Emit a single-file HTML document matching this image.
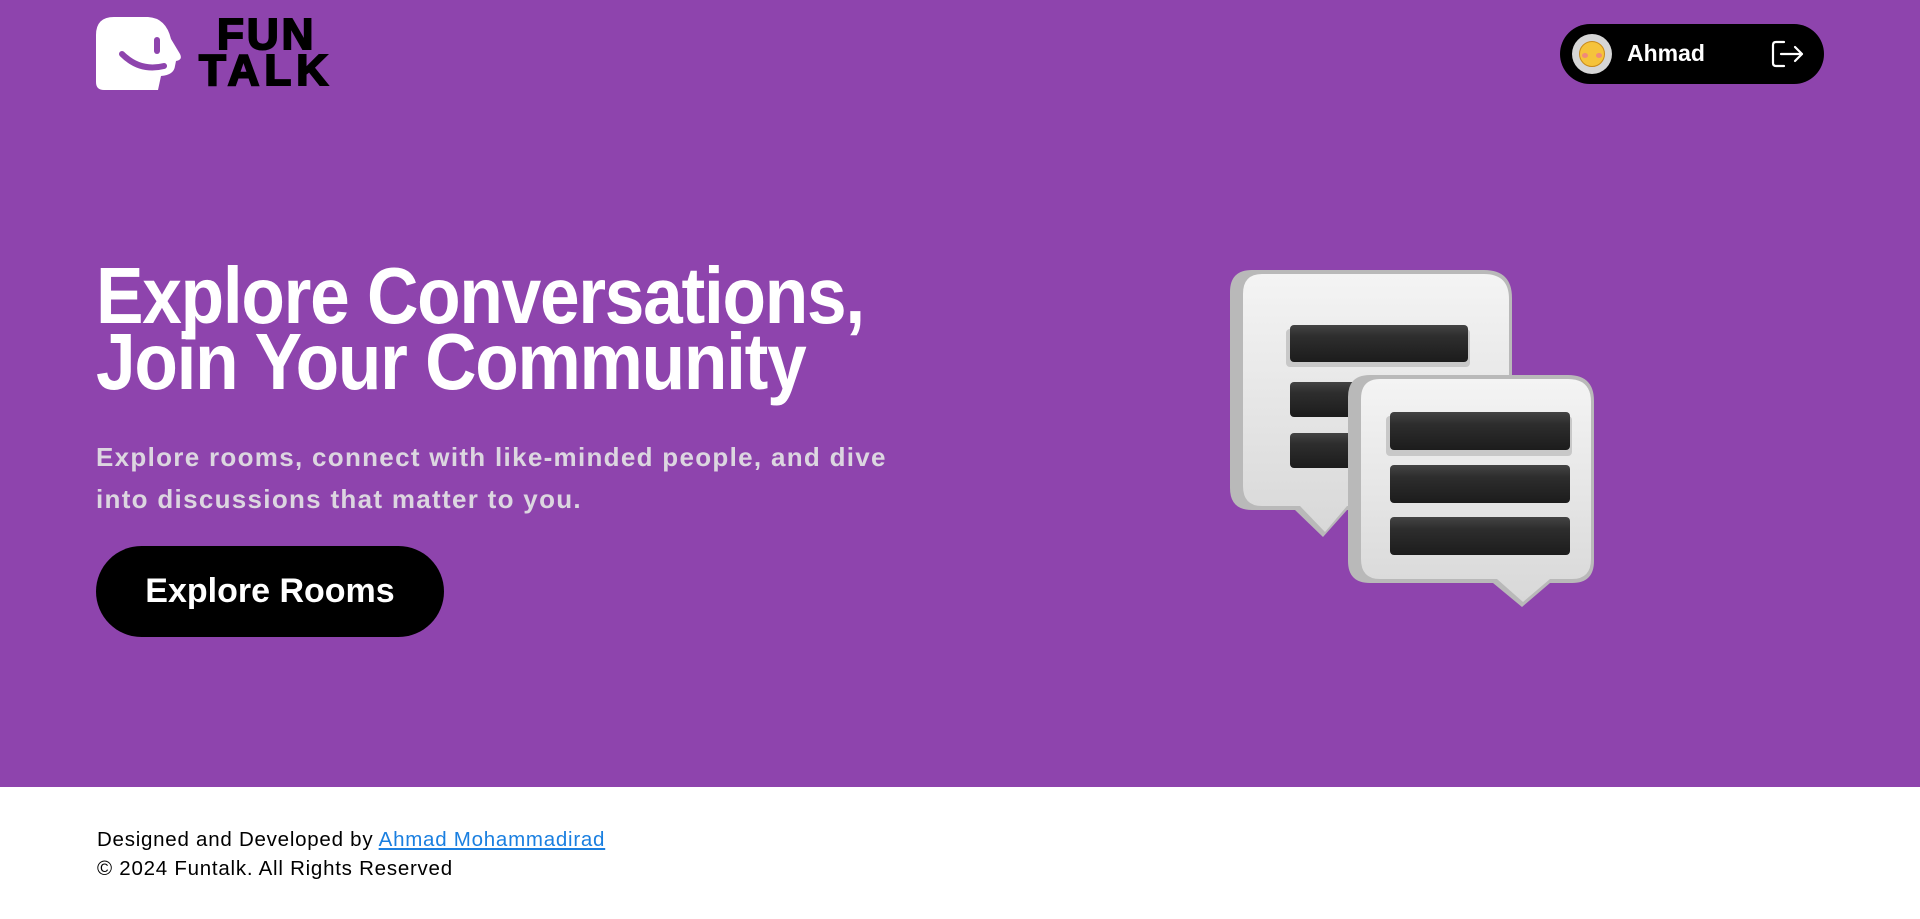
<!DOCTYPE html>
<html><head><meta charset="utf-8"><style>
*{margin:0;padding:0;box-sizing:border-box}
html,body{width:1920px;height:919px;overflow:hidden;background:#fff;font-family:"Liberation Sans",sans-serif}
.hero{position:absolute;left:0;top:0;width:1920px;height:787px;background:#8e44ad}
.abs{position:absolute}
h1{position:absolute;left:96px;top:263px;font-size:80px;line-height:66px;font-weight:700;color:#fff;letter-spacing:-1.4px;transform:scaleX(.89);transform-origin:left top;white-space:nowrap}
.sub{position:absolute;left:96px;top:436px;font-size:26px;line-height:42px;font-weight:700;color:#dcd6e0;white-space:nowrap;letter-spacing:1.3px}
.btn{position:absolute;left:96px;top:546px;width:348px;height:91px;border-radius:46px;background:#000;color:#fff;font-size:34px;font-weight:700;text-align:center;line-height:91px}
.pill{position:absolute;left:1560px;top:24px;width:264px;height:60px;border-radius:30px;background:#000}
.foot{position:absolute;left:97px;top:825px;font-size:20.5px;line-height:29px;color:#000;letter-spacing:.75px}
.foot a{color:#1a7fe0;text-decoration:underline}
</style></head><body>
<div class="hero"></div>
<svg class="abs" style="left:96px;top:17px" width="90" height="76" viewBox="0 0 90 76">
<path d="M0 18 Q0 0 18 0 L52 0 Q70 1 75 22 L84 37 Q87 43 80 44 L79 49 Q78 58 65 59 L62 73 L8 73 Q0 73 0 65 Z" fill="#fff"/>
<line x1="61" y1="23" x2="61" y2="34" stroke="#8e44ad" stroke-width="6" stroke-linecap="round"/>
<path d="M26 37 Q44 55 68 49" fill="none" stroke="#8e44ad" stroke-width="6" stroke-linecap="round"/>
</svg>
<div class="abs" style="left:217px;top:15px;font-size:44px;font-weight:700;line-height:40px;color:#000;letter-spacing:3px;-webkit-text-stroke:2px #000">FUN</div>
<div class="abs" style="left:199px;top:51px;font-size:44px;font-weight:700;line-height:40px;color:#000;letter-spacing:5px;-webkit-text-stroke:2px #000">TALK</div>

<div class="pill"></div>
<div class="abs" style="left:1572px;top:34px;width:40px;height:40px;border-radius:50%;background:#d6d6d6"></div>
<div class="abs" style="left:1579px;top:41px;width:26px;height:26px;border-radius:50%;background:#f5c33b;border:1px solid #c98a1a"></div>
<div class="abs" style="left:1582px;top:53px;width:6px;height:5px;border-radius:50%;background:#f08a7a"></div>
<div class="abs" style="left:1596px;top:53px;width:6px;height:5px;border-radius:50%;background:#f08a7a"></div>
<div class="abs" style="left:1627px;top:40px;font-size:23px;font-weight:700;color:#fff;line-height:26px">Ahmad</div>
<svg class="abs" style="left:1770px;top:39px" width="36" height="30" viewBox="0 0 36 30" fill="none" stroke="#fff" stroke-width="2.2" stroke-linecap="round" stroke-linejoin="round">
<path d="M14 3 H6 Q3 3 3 6 V24 Q3 27 6 27 H14"/><path d="M11 15 H32 M25 8 L32 15 L25 22"/>
</svg>

<h1>Explore Conversations,<br>Join Your Community</h1>
<div class="sub">Explore rooms, connect with like-minded people, and dive<br>into discussions that matter to you.</div>
<div class="btn">Explore Rooms</div>

<svg class="abs" style="left:1220px;top:262px" width="390" height="355" viewBox="1220 262 390 355">
<defs>
<linearGradient id="bg" x1="0" y1="0" x2="0" y2="1"><stop offset="0" stop-color="#f4f4f4"/><stop offset="1" stop-color="#d8d8d8"/></linearGradient>
<linearGradient id="bar" x1="0" y1="0" x2="0" y2="1"><stop offset="0" stop-color="#444"/><stop offset=".3" stop-color="#2e2e2e"/><stop offset="1" stop-color="#1c1c1c"/></linearGradient>
</defs>
<path d="M1252 270 H1484 Q1512 270 1512 298 V488 Q1512 510 1490 510 H1347 L1323 537 L1295 510 H1252 Q1230 510 1230 488 V292 Q1230 270 1252 270 Z" fill="#b9b9b9"/>
<path d="M1262 274 H1484 Q1509 274 1509 299 V486 Q1509 506 1490 506 H1347 L1325 532 L1300 506 H1262 Q1243 506 1243 486 V294 Q1243 274 1262 274 Z" fill="url(#bg)"/>
<rect x="1286" y="329" width="184" height="38" rx="4" fill="#c8c8c8"/>
<rect x="1290" y="325" width="178" height="37" rx="4" fill="url(#bar)"/>
<rect x="1290" y="382" width="178" height="35" rx="4" fill="url(#bar)"/>
<rect x="1290" y="433" width="178" height="35" rx="4" fill="url(#bar)"/>
<path d="M1370 375 H1568 Q1594 375 1594 401 V561 Q1594 583 1572 583 H1550 L1522 607 L1493 583 H1370 Q1348 583 1348 561 V397 Q1348 375 1370 375 Z" fill="#b9b9b9"/>
<path d="M1380 379 H1568 Q1591 379 1591 402 V559 Q1591 579 1572 579 H1550 L1523 602 L1497 579 H1380 Q1361 579 1361 559 V399 Q1361 379 1380 379 Z" fill="url(#bg)"/>
<rect x="1386" y="416" width="186" height="40" rx="4" fill="#c8c8c8"/>
<rect x="1390" y="412" width="180" height="38" rx="4" fill="url(#bar)"/>
<rect x="1390" y="465" width="180" height="38" rx="4" fill="url(#bar)"/>
<rect x="1390" y="517" width="180" height="38" rx="4" fill="url(#bar)"/>
</svg>

<div class="foot">Designed and Developed by <a>Ahmad Mohammadirad</a><br>© 2024 Funtalk. All Rights Reserved</div>
</body></html>
